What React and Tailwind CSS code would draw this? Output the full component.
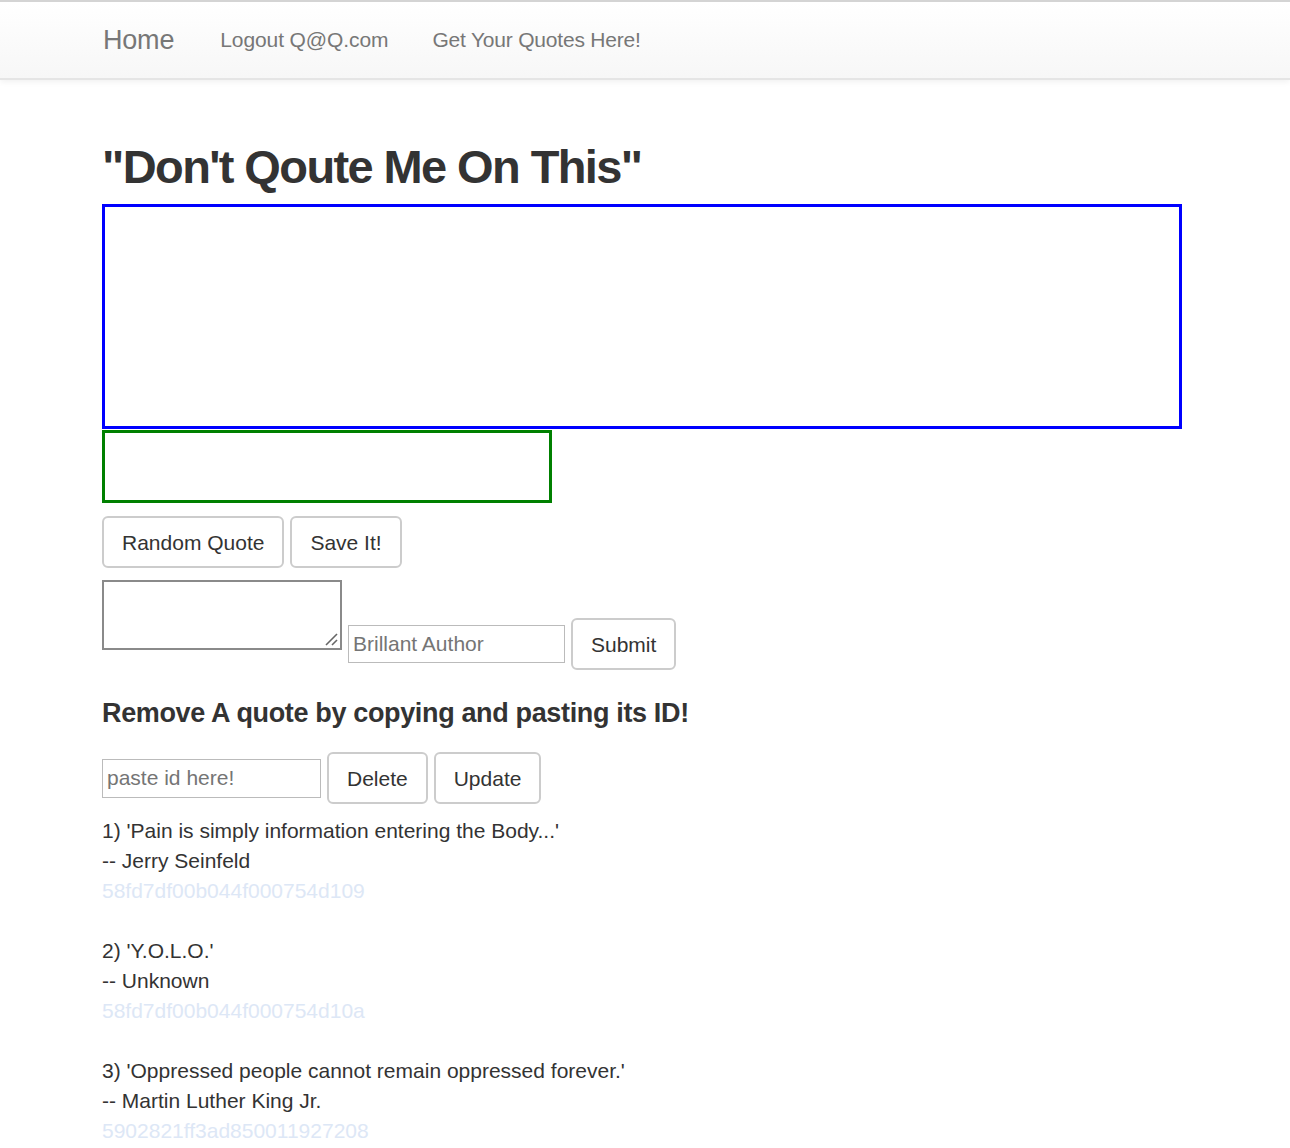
import React from "react";

const quotes = [
  { n: 1, text: "Pain is simply information entering the Body...", author: "Jerry Seinfeld", id: "58fd7df00b044f000754d109" },
  { n: 2, text: "Y.O.L.O.", author: "Unknown", id: "58fd7df00b044f000754d10a" },
  { n: 3, text: "Oppressed people cannot remain oppressed forever.", author: "Martin Luther King Jr.", id: "5902821ff3ad850011927208" },
];

const btn =
  "h-[52px] px-[18px] border-2 border-[#cccccc] rounded-[6px] bg-white text-[21px] text-[#333] leading-none";

const App = () => {
  return (
    <div className="min-h-screen bg-white text-[#333] font-['Helvetica_Neue','Liberation_Sans',Arial,sans-serif] text-[21px]">
      {/* Navbar */}
      <nav className="border-t-2 border-[#d4d4d4] h-[80px] bg-gradient-to-b from-white to-[#f7f7f7] border-b-2 border-b-[#e5e5e5] shadow-[0_2px_6px_rgba(0,0,0,0.06)]">
        <div className="pl-[103px] flex items-center h-full text-[#777]">
          <span className="text-[27px] tracking-[-0.2px] mr-[46px]">Home</span>
          <span className="mr-[44px] tracking-[-0.1px]">Logout Q@Q.com</span>
          <span className="tracking-[-0.2px]">Get Your Quotes Here!</span>
        </div>
      </nav>

      <div className="pl-[102px] pt-[63px]">
        <h1 className="text-[47px] font-bold leading-none tracking-[-1.6px] mb-[14px]">
          "Don't Qoute Me On This"
        </h1>

        {/* quote display */}
        <div className="w-[1080px] h-[225px] border-[3px] border-[#0000ff]" />
        <div className="w-[450px] h-[73px] border-[3px] border-[#008000] mt-[1px]" />

        <div className="flex gap-[6px] mt-[13px]">
          <button className={btn}>Random Quote</button>
          <button className={btn}>Save It!</button>
        </div>

        {/* add quote form */}
        <div className="flex items-end gap-[6px] mt-[12px]">
          <div className="relative w-[240px] h-[70px] border-2 border-[#8a8a8a]">
            <svg className="absolute right-[2px] bottom-[2px]" width="14" height="14" viewBox="0 0 14 14">
              <line x1="2" y1="13" x2="13" y2="2" stroke="#666" strokeWidth="1.6" />
              <line x1="8" y1="13" x2="13" y2="8" stroke="#666" strokeWidth="1.6" />
            </svg>
          </div>
          <input
            className="w-[217px] h-[38px] border border-[#bbb] px-[4px] text-[21px] placeholder:text-[#757575] mb-[-13px] outline-none"
            placeholder="Brillant Author"
          />
          <button className={btn + " mb-[-20px]"}>Submit</button>
        </div>

        <h4 className="text-[27px] font-bold mt-[50px] leading-none tracking-[-0.35px]">
          Remove A quote by copying and pasting its ID!
        </h4>

        <div className="flex items-center gap-[6px] mt-[25px]">
          <input
            className="w-[219px] h-[39px] border border-[#bbb] px-[4px] text-[21px] placeholder:text-[#757575] outline-none"
            placeholder="paste id here!"
          />
          <button className={btn}>Delete</button>
          <button className={btn}>Update</button>
        </div>

        {/* quote list */}
        <div className="mt-[12px] leading-[30px]">
          {quotes.map((q) => (
            <div key={q.id} className="mb-[30px]">
              <p>
                {q.n}) '{q.text}'
              </p>
              <p>-- {q.author}</p>
              <p className="text-[#dde7f6]">{q.id}</p>
            </div>
          ))}
        </div>
      </div>
    </div>
  );
};

export default App;
